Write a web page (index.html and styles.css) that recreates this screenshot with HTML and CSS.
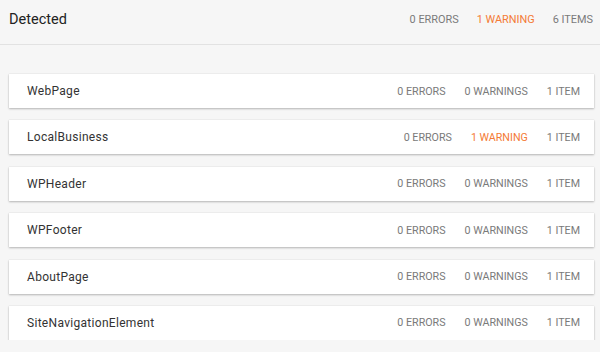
FILE: index.html
```html
<!DOCTYPE html>
<html lang="en">
<head>
    <meta charset="UTF-8">
    <title>Detected</title>
    <link rel="stylesheet" href="styles.css">
</head>
<body>
    <div class="header">
        <h1>Detected</h1>
        <div class="stats">
            <span>0 Errors</span>
            <span class="warn">1 Warning</span>
            <span>6 Items</span>
        </div>
    </div>

    <div class="list">
        <div class="card">
            <span class="name">WebPage</span>
            <div class="stats">
                <span>0 Errors</span>
                <span>0 Warnings</span>
                <span>1 Item</span>
            </div>
        </div>
        <div class="card">
            <span class="name">LocalBusiness</span>
            <div class="stats">
                <span>0 Errors</span>
                <span class="warn">1 Warning</span>
                <span>1 Item</span>
            </div>
        </div>
        <div class="card">
            <span class="name">WPHeader</span>
            <div class="stats">
                <span>0 Errors</span>
                <span>0 Warnings</span>
                <span>1 Item</span>
            </div>
        </div>
        <div class="card">
            <span class="name">WPFooter</span>
            <div class="stats">
                <span>0 Errors</span>
                <span>0 Warnings</span>
                <span>1 Item</span>
            </div>
        </div>
        <div class="card">
            <span class="name">AboutPage</span>
            <div class="stats">
                <span>0 Errors</span>
                <span>0 Warnings</span>
                <span>1 Item</span>
            </div>
        </div>
        <div class="card">
            <span class="name">SiteNavigationElement</span>
            <div class="stats">
                <span>0 Errors</span>
                <span>0 Warnings</span>
                <span>1 Item</span>
            </div>
        </div>
    </div>
</body>
</html>
```

FILE: styles.css
```css
body {
    margin: 0;
    font-family: Roboto, "Liberation Sans", sans-serif;
    background: #f6f6f6;
    color: #333;
}
.header {
    display: flex;
    align-items: center;
    justify-content: space-between;
    height: 20px;
    padding: 9px 7px 15px 9px;
    border-bottom: 1px solid #e2e2e2;
}
.header h1 {
    margin: 0;
    font-size: 14.5px;
    font-weight: 400;
    color: #222;
}
.stats {
    display: flex;
    gap: 19px;
    font-size: 10.7px;
    text-transform: uppercase;
    color: #7a7a7a;
}
.header .stats {
    font-size: 10.9px;
    gap: 18px;
}
.warn {
    color: #f47a35;
}
.list {
    display: flex;
    flex-direction: column;
    gap: 12.4px;
    padding: 29px 6px 0 9px;
}
.card {
    display: flex;
    align-items: center;
    justify-content: space-between;
    height: 34px;
    padding: 0 14px 0 18px;
    background: white;
    box-shadow: 0 1px 2px rgba(0,0,0,0.25), 0 0 1px rgba(0,0,0,0.15);
}
.name {
    font-size: 12px;
    letter-spacing: 0.3px;
    color: #333;
}
```
